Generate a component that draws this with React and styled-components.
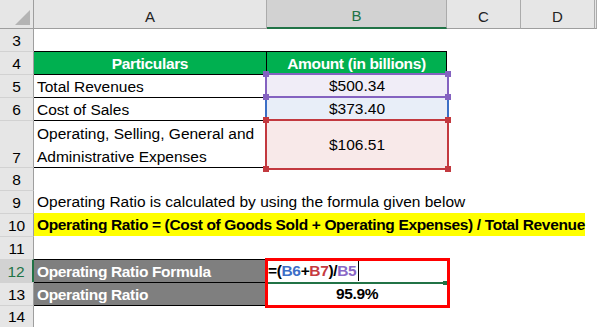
import styled, { createGlobalStyle } from 'styled-components'

const GlobalStyle = createGlobalStyle`
  body {
    margin: 0;
    background: #ffffff;
  }
`

const GRID = '34px 233px 180px 74px 74px 2px'

const REF = {
  purple: { line: '#8462c0', fill: '#f0edf7', text: '#8a68c6' },
  blue: { line: '#3c6fc6', fill: '#e8eef8', text: '#3d6fc8' },
  red: { line: '#c3393f', fill: '#f8e9e9', text: '#c63a40' },
}

const Sheet = styled.div`
  width: 597px;
  height: 327px;
  overflow: hidden;
  font-family: "Liberation Sans", Arial, sans-serif;
  font-size: 15.5px;
  color: #000;
`

const Row = styled.div`
  display: grid;
  grid-template-columns: ${GRID};
  height: ${p => p.$h}px;
`

const Corner = styled.div`
  position: relative;
  box-sizing: border-box;
  background: #e6e6e6;
  border-right: 1px solid #9e9e9e;
  border-bottom: 1px solid #9e9e9e;
  &::after {
    content: '';
    position: absolute;
    right: 3px;
    bottom: 3px;
    width: 15px;
    height: 15px;
    background: #b4b4b4;
    clip-path: polygon(100% 0, 100% 100%, 0 100%);
  }
`

const ColHead = styled.div`
  box-sizing: border-box;
  display: flex;
  justify-content: center;
  align-items: center;
  padding-top: 4px;
  font-size: 15px;
  background: ${p => (p.$active ? '#d2d2d2' : '#e6e6e6')};
  color: ${p => (p.$active ? '#217346' : '#222')};
  border-right: 1px solid #ababab;
  border-bottom: ${p => (p.$active ? '2px solid #217346' : '1px solid #9e9e9e')};
`

const RowHead = styled.div`
  box-sizing: border-box;
  display: flex;
  justify-content: center;
  align-items: ${p => (p.$bottom ? 'flex-end' : 'center')};
  padding: 1px 0 ${p => (p.$bottom ? '2px' : '0')};
  font-size: 15.5px;
  background: ${p => (p.$active ? '#d2d2d2' : '#e6e6e6')};
  color: ${p => (p.$active ? '#217346' : '#000')};
  border-right: ${p => (p.$active ? '2px solid #217346' : '1px solid #9e9e9e')};
  border-top: ${p => (p.$first ? 'none' : '1px solid #d2d2d2')};
`

const Cell = styled.div`
  box-sizing: border-box;
  position: relative;
  display: flex;
  align-items: ${p => (p.$bottom ? 'flex-end' : 'center')};
  justify-content: ${p => (p.$center ? 'center' : 'flex-start')};
  padding: 1px 3px 0;
  white-space: nowrap;
  grid-column: span ${p => p.$span || 1};
  background: ${p => p.$bg || 'transparent'};
  color: ${p => p.$color || '#000'};
  font-weight: ${p => (p.$bold ? 700 : 400)};
  letter-spacing: ${p => (p.$bold ? '-0.35px' : '0')};
  border-top: ${p => (p.$bt ? '1px solid #000' : 'none')};
  border-right: ${p => (p.$br ? '1px solid #000' : 'none')};
`

const Wrapped = styled.div`
  white-space: normal;
  line-height: 23px;
  padding-bottom: 1px;
`

const Highlight = styled.div`
  align-self: stretch;
  display: flex;
  align-items: center;
  width: 551px;
  padding-left: 3px;
  box-sizing: border-box;
  background: #ffff00;
`

const RefBox = styled.div`
  position: absolute;
  top: -1px;
  bottom: -1px;
  left: -2px;
  right: -2px;
  display: flex;
  align-items: center;
  justify-content: center;
  padding-top: 1px;
  border: 2px solid ${p => REF[p.$tone].line};
  background: ${p => REF[p.$tone].fill};
  z-index: ${p => p.$z};
`

const Handle = styled.span`
  position: absolute;
  width: 6px;
  height: 6px;
  background: ${p => REF[p.$tone].line};
  ${p => (p.$y === 'top' ? 'top: -4px;' : 'bottom: -4px;')}
  ${p => (p.$x === 'left' ? 'left: -4px;' : 'right: -4px;')}
`

const Ref = styled.span`
  color: ${p => REF[p.$tone].text};
`

const Caret = styled.span`
  display: inline-block;
  width: 1px;
  height: 20px;
  margin-left: 2px;
  background: #000;
`

const FormulaCell = styled(Cell)`
  padding-left: 1px;
`

const ActiveEdge = styled.div`
  position: absolute;
  left: 0;
  right: 0;
  bottom: -2px;
  height: 2px;
  background: #217346;
  z-index: 4;
  &::after {
    content: '';
    position: absolute;
    right: -1px;
    top: -1px;
    width: 5px;
    height: 4px;
    background: #217346;
  }
`

const Annotation = styled.div`
  position: absolute;
  left: -2px;
  top: -1px;
  width: 185px;
  height: 50px;
  box-sizing: border-box;
  border: 3px solid #ff0000;
  z-index: 5;
  pointer-events: none;
`

const Corners = ({ tone }) => (
  <>
    <Handle $tone={tone} $y="top" $x="left" />
    <Handle $tone={tone} $y="top" $x="right" />
    <Handle $tone={tone} $y="bottom" $x="left" />
    <Handle $tone={tone} $y="bottom" $x="right" />
  </>
)

export default function App() {
  return (
    <Sheet>
      <GlobalStyle />
      <Row $h={29}>
        <Corner />
        <ColHead>A</ColHead>
        <ColHead $active>B</ColHead>
        <ColHead>C</ColHead>
        <ColHead>D</ColHead>
        <ColHead />
      </Row>

      <Row $h={22}>
        <RowHead $first>3</RowHead>
      </Row>

      <Row $h={23}>
        <RowHead>4</RowHead>
        <Cell $bt $br $center $bold $bg="#00b050" $color="#fff">Particulars</Cell>
        <Cell $bt $br $center $bold $bg="#00b050" $color="#fff">Amount (in billions)</Cell>
      </Row>

      <Row $h={23}>
        <RowHead>5</RowHead>
        <Cell $bt>Total Revenues</Cell>
        <Cell>
          <RefBox $tone="purple" $z={2}>
            $500.34
            <Corners tone="purple" />
          </RefBox>
        </Cell>
      </Row>

      <Row $h={23}>
        <RowHead>6</RowHead>
        <Cell $bt>Cost of Sales</Cell>
        <Cell>
          <RefBox $tone="blue" $z={1}>$373.40</RefBox>
        </Cell>
      </Row>

      <Row $h={47}>
        <RowHead $bottom>7</RowHead>
        <Cell $bt $bottom>
          <Wrapped>
            Operating, Selling, General and
            <br />
            Administrative Expenses
          </Wrapped>
        </Cell>
        <Cell>
          <RefBox $tone="red" $z={3}>
            $106.51
            <Corners tone="red" />
          </RefBox>
        </Cell>
      </Row>

      <Row $h={23}>
        <RowHead>8</RowHead>
        <Cell $bt />
      </Row>

      <Row $h={23}>
        <RowHead>9</RowHead>
        <Cell $span={4}>Operating Ratio is calculated by using the formula given below</Cell>
      </Row>

      <Row $h={23}>
        <RowHead>10</RowHead>
        <Cell $span={5} $bold style={{ padding: 0 }}>
          <Highlight>Operating Ratio = (Cost of Goods Sold + Operating Expenses) / Total Revenue</Highlight>
        </Cell>
      </Row>

      <Row $h={23}>
        <RowHead>11</RowHead>
      </Row>

      <Row $h={23}>
        <RowHead $active>12</RowHead>
        <Cell $bt $br $bold $bg="#7f7f7f" $color="#fff">Operating Ratio Formula</Cell>
        <FormulaCell $bold>
          =(<Ref $tone="blue">B6</Ref>+<Ref $tone="red">B7</Ref>)/<Ref $tone="purple">B5</Ref>
          <Caret />
          <ActiveEdge />
          <Annotation />
        </FormulaCell>
      </Row>

      <Row $h={23}>
        <RowHead>13</RowHead>
        <Cell $bt $br $bold $bg="#7f7f7f" $color="#fff">Operating Ratio</Cell>
        <Cell $center $bold>95.9%</Cell>
      </Row>

      <Row $h={22}>
        <RowHead>14</RowHead>
        <Cell $bt />
      </Row>
    </Sheet>
  )
}
